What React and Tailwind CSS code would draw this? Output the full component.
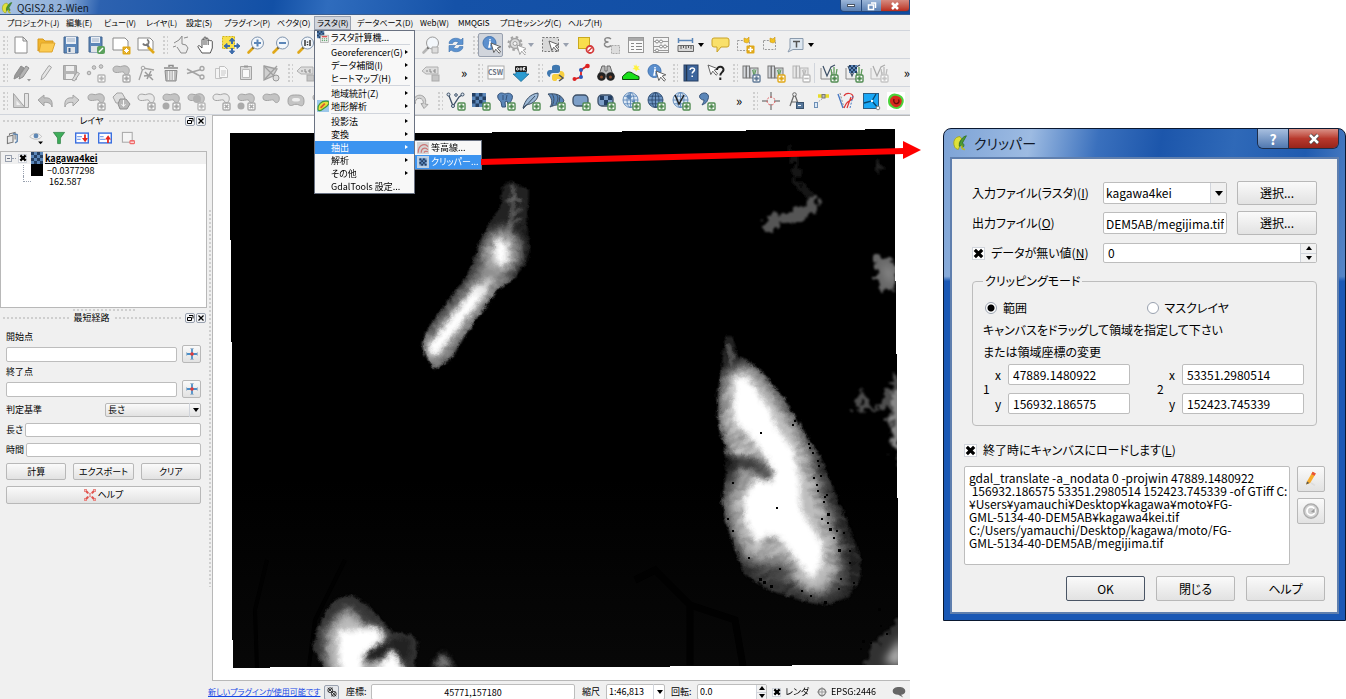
import React from 'react';

const BLUE = '#5b86b8';
const DARK = '#3c4f66';
const GRAY = '#a3a3a3';
const LIGHT = '#cfcfcf';
const GREEN = '#4f8a50';
const GOLD = '#e0a818';

const Svg = ({ children, className = 'h-5 w-5' }) => (
  <svg viewBox="0 0 20 20" className={className} fill="none" aria-hidden="true">
    {children}
  </svg>
);

const Badge = ({ c = GREEN, minus, cross }) => (
  <g>
    <rect x="12" y="12" width="7" height="7" rx="1" fill="#fff" stroke={c} strokeWidth="1.400" />
    {!minus && !cross && <path d="M15.500 13.200v4.600M13.200 15.500h4.600" stroke={c} strokeWidth="2" />}
    {minus && <path d="M13.200 15.500h4.600" stroke={c} strokeWidth="1.600" />}
    {cross && <path d="M13.700 13.700l3.600 3.600M17.300 13.700l-3.600 3.600" stroke={c} strokeWidth="1.600" />}
  </g>
);

const Lens = ({ c = '#7e93ad', handle = GOLD, children }) => (
  <g>
    <path d="M8 12L2.5 17.5" stroke={handle} strokeWidth="2.6" strokeLinecap="round" />
    <path d="M8.5 11.5l-2 2" stroke="#444" strokeWidth="1.6" />
    <circle cx="11.5" cy="8" r="6" fill="#f3f7fb" stroke={c} strokeWidth="1" />
    {children}
  </g>
);

const Blob = ({ f = '#c4c4c4' }) => (
  <path
    d="M2 6.5C2 3.5 5 2.5 8 3.500C10 4.300 12 2 15 3C18.500 4 19 8 17.500 10.500C16 12.500 13.500 11.500 13 9.500C12 8 9 9.500 6.500 9.500C4 9.800 2 9 2 6.500Z"
    fill={f}
    stroke={GRAY}
  />
);

const Cursor = ({ x = 9, y = 8, f = '#fff', s = '#555' }) => (
  <path
    transform={`translate(${x} ${y})`}
    d="M0 0l2.800 9.500 2-3.300 3.300 4 1.500-1.300-3.300-3.900 3.500-1.200z"
    fill={f}
    stroke={s}
    strokeWidth=".9"
  />
);

const Checker = ({ x = 3, y = 3, s = 3 }) => (
  <g>
    <rect x={x} y={y} width={s * 4} height={s * 4} fill={BLUE} />
    {[0, 1, 2, 3].map((r) =>
      [0, 1, 2, 3].map((c) =>
        (r + c) % 2 === 0 ? (
          <rect key={`${r}${c}`} x={x + c * s} y={y + r * s} width={s} height={s} fill="#233f63" />
        ) : null
      )
    )}
  </g>
);

const Globe = ({ dark }) => (
  <g stroke={dark ? '#2d4b70' : BLUE} strokeWidth=".9">
    <circle cx="9.500" cy="9" r="7.500" fill={dark ? '#6f96c4' : '#dbe7f4'} />
    <ellipse cx="9.500" cy="9" rx="3.500" ry="7.500" />
    <path d="M2 9h15M3.200 5.200h12.600M3.200 12.800h12.600M9.500 1.500v15" />
  </g>
);

const Books = ({ g }) => (
  <g stroke={g ? '#b5b5b5' : '#777'} fill={g ? '#e8e8e8' : '#d5d8dc'}>
    <rect x="2" y="3" width="3" height="12" />
    <rect x="5.500" y="3" width="3" height="12" />
    <rect x="9" y="5" width="8" height="10" />
    <path d="M13 12V6M11.500 7l1.500 5M15 6.500L13.500 12" stroke={g ? '#b5b5b5' : '#5d9a5a'} />
  </g>
);

const Layer = ({ g }) => (
  <g>
    <path d="M2 5v11h11V9" fill="#eee" stroke={g ? '#bbb' : '#888'} />
    <path d="M4 3l4 10 4-9 4-2" stroke={g ? '#aaa' : DARK} strokeWidth="1.200" />
    <path d="M13 12l-1-6M15 12V4M17 12l1-6" stroke={g ? '#bbb' : '#5d9a5a'} strokeWidth="1.300" />
  </g>
);

const ICONS = {
  newFile: <path d="M4 2h8l4 4v12H4zM12 2v4h4" fill="#fff" stroke="#8a8a8a" />,
  open: (
    <>
      <path d="M2 16V4h5l2 2h8v4H6z" fill="#f0b52e" stroke="#d89a1c" />
      <path d="M3 17L5 8h14l-3 9z" fill="#fbcb52" stroke="#dfa52c" />
    </>
  ),
  save: (
    <>
      <path d="M3 2h14v16H3z" fill={BLUE} stroke="#42648f" />
      <path d="M5 2h10v7H5z" fill="#e9eef5" />
      <path d="M6 4h8M6 6h8" stroke="#9fb1c8" />
      <path d="M6 12h8v6H6z" fill="#dfe3e8" />
      <path d="M7.500 13h2v4h-2z" fill="#42648f" />
    </>
  ),
  saveAs: (
    <>
      <path d="M3 2h13v15H3z" fill={BLUE} stroke="#42648f" />
      <path d="M5 2h9v6H5z" fill="#e9eef5" />
      <path d="M6 4h7M6 6h7" stroke="#9fb1c8" />
      <path d="M5 11h8v6H5z" fill="#dfe3e8" />
      <rect x="11" y="11" width="8" height="8" rx="2" fill="#5aa05c" />
      <path d="M13 17l4-4" stroke="#fff" strokeWidth="1.500" />
    </>
  ),
  composer: (
    <>
      <path d="M2 3h12l3 3v9H2z" fill="#fff" stroke="#8a8a8a" />
      <rect x="11.500" y="11.500" width="8" height="8" rx="1" fill={GOLD} />
      <path d="M15.500 13v5M13 15.500h5M13.800 13.800l3.500 3.500M17.300 13.800l-3.500 3.500" stroke="#fff" />
    </>
  ),
  composerMgr: (
    <>
      <path d="M2 3h12l3 3v9H2z" fill="#fff" stroke="#8a8a8a" />
      <path d="M12 12l6 6" stroke={GOLD} strokeWidth="2.600" />
      <path d="M10 9l3 3" stroke="#777" strokeWidth="2" />
      <path d="M11 4.500a3 3 0 1 1-4 4" stroke="#777" strokeWidth="1.800" />
    </>
  ),
  touch: (
    <path d="M3 8l5-3 3-4v8l4 1 2 3-2 5h-5l-4-6M2 12l3-1M13 3l4-1" stroke="#8c8c8c" fill="#ececec" strokeWidth="1" />
  ),
  hand: (
    <path
      d="M6 18l-4-6c-.5-1 .8-2 1.800-1L6 13V5c0-1.500 2-1.500 2 0V3c0-1.500 2-1.500 2 0v1c0-1.500 2-1.500 2 0v2c0-1.500 2-1.300 2 0 1-1 2.300-.5 2.300 1v6l-2 5zM8 5v5M10 4v6M12.200 6v4"
      fill="#fff"
      stroke="#555"
    />
  ),
  panSel: (
    <>
      <path d="M1.500 1.500h12v12h-12z" fill="#f8e04a" stroke="#d2b417" strokeDasharray="2 1" />
      <path
        d="M11 3l2.500 3h-5zM11 19l2.500-3h-5zM3 11l3-2.500v5zM19 11l-3-2.500v5z"
        fill="#3d6cab"
        stroke="#3d6cab"
      />
      <path d="M11 6v3M11 13v3M6 11h3M13 11h3" stroke="#3d6cab" strokeWidth="2" />
    </>
  ),
  zoomIn: <Lens><path d="M11.500 4.500v7M8 8h7" stroke={BLUE} strokeWidth="2" /></Lens>,
  zoomOut: <Lens><path d="M8 8h7" stroke={BLUE} strokeWidth="2" /></Lens>,
  zoomOne: <Lens><path d="M9 5v6M14 5v6M11.500 6.500v1.200M11.500 9v1.200" stroke="#333" strokeWidth="1.500" /></Lens>,
  zoomGray: <Lens c="#9a9a9a" handle="#b5b5b5"><path d="M11 12h6v6h-6z" fill="#ddd" stroke="#aaa" /></Lens>,
  refresh: (
    <>
      <path d="M3 8.500c0-5 8-7 12-3.500l2-2v6.500h-6.500l2-2c-2.500-2-5.500-1-6 1z" fill="#5b92d0" stroke="#3f72ad" strokeWidth=".6" />
      <path d="M17 11.500c0 5-8 7-12 3.500l-2 2v-6.500h6.500l-2 2c2.500 2 5.500 1 6-1z" fill="#5b92d0" stroke="#3f72ad" strokeWidth=".6" />
    </>
  ),
  identify: (
    <>
      <circle cx="8.500" cy="8" r="6.500" fill="#5b8fce" stroke="#4375b2" />
      <path d="M9 4v1.500M8 7h1.200L8 12h1.500" stroke="#fff" strokeWidth="1.500" />
      <Cursor x={10} y={8} />
    </>
  ),
  gear: (
    <>
      <circle cx="9" cy="8.500" r="5" stroke={GRAY} strokeWidth="1.500" fill="#ddd" />
      <circle cx="9" cy="8.500" r="6.500" stroke={GRAY} strokeWidth="2" strokeDasharray="2.500 2.600" />
      <circle cx="9" cy="8.500" r="2" fill="#f5f5f5" stroke={GRAY} />
      <Cursor x={11} y={10} s="#999" />
    </>
  ),
  select: (
    <>
      <rect x="1.500" y="2.500" width="16" height="14" fill="#d9d9d9" stroke="#777" strokeDasharray="2 1.500" />
      <Cursor x={8} y={6} />
    </>
  ),
  deselect: (
    <>
      <rect x="2.500" y="2.500" width="11" height="11" fill="#f9de4c" stroke="#c9a91e" />
      <circle cx="14" cy="14.500" r="3.500" fill="#fff" stroke="#d43c3c" strokeWidth="1.800" />
      <path d="M12 16.500l4-4" stroke="#d43c3c" strokeWidth="1.500" />
    </>
  ),
  epsilon: (
    <>
      <path d="M10 4C7 1.500 3 3 4 5.500c.5 1.500 2.500 1.500 3.500 1.500C5 7 3 8 3.500 10c.7 2.500 5 2.500 6.500.5" stroke="#888" strokeWidth="1.500" />
      <rect x="10.500" y="10.500" width="8" height="8" fill="#ddd" stroke="#aaa" strokeDasharray="2 1" />
    </>
  ),
  table: (
    <>
      <rect x="2.500" y="2.500" width="15" height="15" fill="#fafafa" stroke="#999" />
      <path d="M3 4.500h14" stroke="#aaa" strokeWidth="3" />
      <path d="M5 8.500h3M5 11.500h3M5 14.500h3M10 8.500h6M10 11.500h6M10 14.500h6" stroke="#888" />
    </>
  ),
  abacus: (
    <>
      <rect x="2.500" y="2.500" width="15" height="15" fill="#f4f4f4" stroke="#999" />
      <path d="M3 6.500h14M3 11.500h14M3 15.500h14" stroke="#999" />
      <g fill="#fff" stroke="#888">
        <circle cx="6" cy="6.500" r="1.500" /><circle cx="10" cy="6.500" r="1.500" /><circle cx="14" cy="11.500" r="1.500" />
        <circle cx="10" cy="11.500" r="1.500" /><circle cx="6" cy="15.500" r="1.500" />
      </g>
    </>
  ),
  measure: (
    <>
      <path d="M2 5.500h15M2.500 3v5M16.500 3v5" stroke={BLUE} strokeWidth="1.500" />
      <path d="M2 10.500h15.500v6H2z" fill="#d8d8d8" stroke="#666" />
      <path d="M5 11v3M7.500 11v2M10 11v3M12.500 11v2M15 11v3" stroke="#555" />
    </>
  ),
  bubble: <path d="M3 3h13a2 2 0 0 1 2 2v5a2 2 0 0 1-2 2h-6l-4 5v-5H3a2 2 0 0 1-2-2V5a2 2 0 0 1 2-2z" fill="#f9e06a" stroke="#c9a227" />,
  bookmarkNew: (
    <>
      <rect x="1.500" y="5.500" width="12" height="10" stroke="#999" strokeDasharray="2 1.300" />
      <path d="M8 3l3 1 2-2v5l-2 1-3-1z" fill="#f3c220" stroke="#c9981c" strokeWidth=".6" />
      <rect x="10.500" y="10.500" width="8" height="8" rx="1" fill={GOLD} />
      <path d="M14.500 12v5M12 14.500h5" stroke="#fff" strokeWidth="1.600" />
    </>
  ),
  bookmark: (
    <>
      <rect x="2.500" y="5.500" width="12" height="9" stroke="#999" strokeDasharray="2 1.300" />
      <path d="M9 3l3 1 2-2v5l-2 1-3-1z" fill="#f3c220" stroke="#c9981c" strokeWidth=".6" />
    </>
  ),
  textNote: (
    <>
      <path d="M4 3.500h13v11H7L2 17l2-4z" fill="#dde7f1" stroke="#8b9bad" />
      <path d="M7 6.500h7M10.500 6.500v6" stroke="#555" strokeWidth="1.500" />
    </>
  ),
  pencils: (
    <>
      <path d="M3 16l1-4 6-9 3 2-6 9z" fill="#999" stroke="#8c8c8c" />
      <path d="M8 16l1-4 6-9 3 2-6 9z" fill="#b5b5b5" stroke="#8c8c8c" />
      <path d="M16 16h4l-2 2.500z" fill="#999" />
    </>
  ),
  pencil: <path d="M5 17l1-4.500L13 2.500l2.500 1.800L8.500 14.500z" fill="#e5e5e5" stroke={GRAY} />,
  saveGray: (
    <>
      <path d="M2.500 2.500h13v14h-13z" fill="#b5b5b5" stroke={GRAY} />
      <path d="M5 3h8v5H5zM5 11h8v5H5z" fill="#efefef" />
      <path d="M11 17l5-8 2.500 1.500-5 7.500z" fill="#ddd" stroke={GRAY} />
    </>
  ),
  addPts: (
    <>
      <g fill={LIGHT} stroke={GRAY}><circle cx="3" cy="10" r="1.800" /><circle cx="8" cy="4.500" r="1.800" /><circle cx="15" cy="3.500" r="1.800" /></g>
      <Badge c="#b5b5b5" />
    </>
  ),
  blobMove: <><Blob /><Badge c="#a8a8a8" /></>,
  blobAdd: <><Blob f="#e8e8e8" /><Badge c="#a8a8a8" /></>,
  blobDel: <><Blob f="#e8e8e8" /><Badge c="#a8a8a8" cross /></>,
  blobPart: <><Blob /><circle cx="5" cy="15" r="3.500" fill="#aaa" /><Badge c="#a8a8a8" /></>,
  blobPartDel: <><Blob /><circle cx="5" cy="15" r="3.500" fill="#aaa" /><Badge c="#a8a8a8" cross /></>,
  blobFill: <><Blob /><circle cx="11" cy="8" r="4" fill="#b0b0b0" /><Badge c="#b5b5b5" /></>,
  blob: <Blob />,
  ring: (
    <>
      <path d="M2 10c0-6 4-6 8-6s8 0 8 6-3 5-5 4-4-1-6 0-5 1-5-4z" fill="#c4c4c4" stroke={GRAY} />
      <path d="M6 9c0-2 2-2 4-2s4 0 4 2-8 2-8 0z" fill="#eee" />
    </>
  ),
  node: (
    <>
      <path d="M3 17L7 5l11 2" stroke={GRAY} strokeWidth="1.300" />
      <path d="M9 9l8 8M11 16l4-8M8 13l8-1" stroke="#9a9a9a" strokeWidth="1.500" />
      <circle cx="7" cy="5" r="1.800" fill="#eee" stroke={GRAY} />
    </>
  ),
  trash: (
    <>
      <path d="M3 5h14M8 4V2.500h4V4" stroke="#8c8c8c" strokeWidth="1.500" />
      <path d="M4 7.500h12L15 18H5z" fill="#bbb" stroke="#8c8c8c" />
      <path d="M7.500 8v9M10 8v9M12.500 8v9" stroke="#f0f0f0" />
    </>
  ),
  cut: (
    <>
      <path d="M1 6l13 7M1 10.500l14-4" stroke="#a5a5a5" strokeWidth="1.600" />
      <circle cx="16" cy="5.500" r="2" stroke="#a5a5a5" strokeWidth="1.300" />
      <circle cx="16" cy="14" r="2" stroke="#a5a5a5" strokeWidth="1.300" />
    </>
  ),
  copy: (
    <>
      <path d="M4.500 5.500h6v10h-6z" fill="#f4f4f4" stroke="#c4c4c4" />
      <path d="M8.500 3.500h5l3 3v8h-8z" fill="#f8f8f8" stroke="#c0c0c0" />
      <path d="M10 8h5M10 10h5M10 12h4" stroke="#c8c8c8" />
    </>
  ),
  paste: (
    <>
      <path d="M4.500 3.500h11v13h-11z" fill="#ddd" stroke={GRAY} />
      <path d="M6.500 6.500h7v8h-7z" fill="#fafafa" stroke="#bbb" />
      <path d="M8 2.500h4v2H8z" fill="#999" />
    </>
  ),
  topo: (
    <>
      <path d="M3 3l13 3-4 7-9 4z" fill="#d0d0d0" stroke="#a0a0a0" strokeWidth="1.300" />
      <path d="M3 3l13 13M16 3L4 16" stroke="#a0a0a0" strokeWidth="1.300" />
      <circle cx="15" cy="15" r="3" fill="#ddd" stroke="#999" />
    </>
  ),
  triangle: (
    <>
      <path d="M2.500 2.500L14 16.500H2.500z" fill="#cfcfcf" stroke={GRAY} />
      <path d="M5.500 9.500v4.500h4z" fill="#f0f0f0" />
      <path d="M13.500 2.500h4v14h-4z" fill="#e5e5e5" stroke={GRAY} />
    </>
  ),
  undo: <path d="M2 9l6-5v3c6-1 9 2 8 9-1-4-4-5-8-4.500V15z" fill="#c0c0c0" stroke={GRAY} />,
  redo: <path d="M18 9l-6-5v3c-6-1-9 2-8 9 1-4 4-5 8-4.500V15z" fill="#d0d0d0" stroke={GRAY} />,
  rotate: <path d="M3 12a6 6 0 1 1 11 1l3 .5-4 4-3-5 2 .3a4 4 0 1 0-7.500-.3z" fill="#d5d5d5" stroke={GRAY} />,
  simplify: (
    <>
      <path d="M2 6l4-4h5l3 5-4 5H5z" fill="#ddd" stroke={GRAY} />
      <path d="M9 8h6l4 5-3 5H9l-2-5z" fill="#b8b8b8" stroke="#909090" />
      <path d="M12.500 9v6M10.500 13l2 2.500 2-2.500" stroke="#f5f5f5" />
    </>
  ),
  abc: (
    <>
      <path d="M1 8l4-4h12v7H5z" fill="#ddd" stroke="#b0b0b0" />
      <path d="M5 8h2M9 6v3h2M15 7h-2v2h2" stroke="#888" />
      <rect x="11" y="12" width="7" height="6" fill="#c5c5c5" stroke="#aaa" />
    </>
  ),
  csw: <rect x="2" y="3" width="16" height="13" fill="#fcfcfc" stroke="#aaa" />,
  ogr: (
    <>
      <path d="M5 8.500h10v2.500h3l-8 7.500-8-7.500h3z" fill="#2c9bd0" stroke="#1c6a94" strokeWidth=".8" />
      <rect x="4" y="3" width="12" height="6" rx="1" fill="#222" />
      <g stroke="#f2f2f2"><circle cx="6.500" cy="6" r="1.100" /><circle cx="10" cy="6" r="1.100" /><path d="M12.500 7.500v-3h1.500l-1.500 1.500 2 1.500" /></g>
    </>
  ),
  python: (
    <>
      <path d="M6 9V4c0-3 8-3 8 0v4c0 1-1 2-2 2H7c-2 0-3 1-3 4-4-1-4-7 0-7h6" fill="#3f78b0" />
      <path d="M14 8c5-1 6 6 2 8h-5v1c-1 2-5 1-5-1v-3c0-1 1-2 2-2h4c2 0 2-1 2-3z" fill="#f7cf3f" />
      <path d="M13 12l4 3-4 3" stroke="#555" strokeWidth="1.500" />
    </>
  ),
  redPath: (
    <>
      <path d="M4 16l6-2V7l6-4" stroke="#d22" strokeWidth="1.800" />
      <g fill="#2d58b8"><circle cx="10" cy="14" r="2" /><circle cx="10" cy="7" r="2" /></g>
      <g fill="#d22"><circle cx="3.500" cy="16" r="2" /><circle cx="16.500" cy="3" r="2.300" /></g>
    </>
  ),
  binoc: (
    <>
      <path d="M6 3h3v5h2V3h3l3 9H3z" fill="#bbb" stroke="#666" />
      <circle cx="5.500" cy="13.500" r="4.300" fill="#222" /><circle cx="14.500" cy="13.500" r="4.300" fill="#222" />
      <circle cx="5.500" cy="14" r="1.500" fill="#8a4a2a" /><circle cx="14.500" cy="14" r="1.500" fill="#8a4a2a" />
    </>
  ),
  terrain: (
    <>
      <path d="M1.500 16.500v-3L6 9.500c4-2 6 2 12 4v3z" fill="#19e019" stroke="#0a4a0a" />
      <path d="M15 1l1 2.500L18.500 3 17 5l2 2-2.800-.2L15 9l-.8-2.500L11.500 6l2-1.500L12.500 2l2 1z" fill="#fff23d" />
    </>
  ),
  help: (
    <>
      <rect x="3" y="2" width="14" height="16" fill="#3d659c" stroke="#263f63" />
      <path d="M5.500 2v16" stroke="#22354f" strokeWidth="1.500" />
      <path d="M9 7c0-3 5-2.500 4.500 0-.3 1.500-2.300 2-2.300 3.500M11.200 12.500V14" stroke="#fff" strokeWidth="1.500" />
    </>
  ),
  whats: (
    <>
      <Cursor x={2} y={2} />
      <path d="M11 7c0-4.500 7-4 6.500 0-.5 2.500-3.200 2.500-3.200 5.500M14.300 14.500v2.500" stroke="#222" strokeWidth="2" />
    </>
  ),
  grass: <><Books /><Badge c="#607a96" /></>,
  grassNew: <><Books /><Badge c={GOLD} /></>,
  grassGray: <><Books g /><Badge c="#bbb" minus /></>,
  layerAdd: <><Layer /><Badge /></>,
  rasterAdd: <><Layer /><Checker x={5} y={2} s={2} /><Badge /></>,
  layerGray: <><Layer g /><Badge c="#c5c5c5" /></>,
  vAdd: (
    <>
      <path d="M2.500 3.500L7 15l6-9 3-2" stroke={DARK} strokeWidth="1.300" />
      <g fill="#dfe8f2" stroke={DARK}><circle cx="2.500" cy="3.500" r="1.500" /><circle cx="7" cy="15" r="1.500" /><circle cx="10" cy="4" r="1.300" /><circle cx="16.500" cy="3.500" r="1.500" /></g>
      <Badge />
    </>
  ),
  checkAdd: <><Checker x={1} y={2} s={3.5} /><Badge /></>,
  elephant: (
    <>
      <path d="M2 4c2-3 5-2 7-1 4-2 9 0 7 5-.5 2-2 3-2 5h-2l-1-3-2 1 .5 5H6l-1-5C3 9 1 7 2 4z" fill={BLUE} stroke="#345178" />
      <path d="M7 4v5M11 4l-1 5" stroke="#345178" /><Badge />
    </>
  ),
  feather: <><path d="M2 17C4 9 9 3 17 2c1 6-5 11-12 12z" fill="#9db9d6" stroke={DARK} /><path d="M2 18L14 5" stroke={DARK} /><Badge /></>,
  shell: (
    <>
      <path d="M2 3c8-1 14 1 16 7l-5 5c0-2-4-1-9 1 3-4 2-9-2-13z" fill={BLUE} stroke={DARK} />
      <path d="M6 3c3 4 2 8 0 12M10 3c3 4 2 6 0 10M14 5l-1 7" stroke={DARK} /><Badge />
    </>
  ),
  db: <><rect x="2" y="4" width="15" height="11" rx="4" fill="#7d9fc8" stroke={DARK} strokeWidth="1.300" /><Badge /></>,
  dbCheck: (
    <>
      <rect x="2" y="4" width="15" height="11" rx="4" fill="#7d9fc8" stroke={DARK} strokeWidth="1.300" />
      <path d="M4 5h4v4H4zM12 5h4v4h-4zM8 9h4v5H8z" fill="#233f63" /><Badge />
    </>
  ),
  globe: <><Globe /><path d="M5 5l4-2 2 3-3 3zM10 10l4-1v4z" fill={BLUE} /><Badge /></>,
  globeDark: <><Globe dark /><Badge /></>,
  globeV: <><Globe /><path d="M4 4l4 9 5-9" stroke="#222" strokeWidth="1.500" /><Badge /></>,
  comma: <><path d="M5 3c5-3 9 1 7 5-1 4-4 5-6 6 1-2 2-3 2-5-4 0-6-4-3-6z" fill={BLUE} stroke="#345178" /><Badge /></>,
  cross: (
    <>
      <path d="M10 1v6M10 13v6M1 10h6M13 10h6" stroke="#555" />
      <circle cx="10" cy="10" r="4" stroke="#d55" strokeDasharray="2 1.500" />
    </>
  ),
  compass: (
    <>
      <path d="M8 4L4 15M9 4l4 11M5 11h7" stroke="#666" strokeWidth="1.200" /><circle cx="8.500" cy="3.500" r="1.800" fill="#eee" stroke="#666" />
      <rect x="10.500" y="11.500" width="7" height="6" fill="#56779b" stroke="#3a536e" /><path d="M12 14.500h3" stroke="#fff" />
    </>
  ),
  gps: (
    <>
      <path d="M7 5h4M14 5h4" stroke="#e8dc2a" strokeWidth="3.500" /><rect x="11" y="3.500" width="3" height="3.500" fill="#bbb" stroke="#777" />
      <path d="M11 8l-4 3" stroke="#aaa" strokeDasharray="1.500 1" /><rect x="3.500" y="11.500" width="3" height="5" fill="#dce9f7" stroke="#6d8fb5" />
    </>
  ),
  tracks: (
    <>
      <path d="M2 3l5 14" stroke="#4477c4" strokeWidth="1.300" /><path d="M4 2l4 15" stroke="#888" strokeDasharray="2 1.500" />
      <path d="M8 5c2-4 9-3 9 1s-5 3-7 7l-2 4M11 17l4-11" stroke="#d33" strokeWidth="1.200" /><path d="M14 17l3-12" stroke="#4477c4" strokeDasharray="2 1.500" />
    </>
  ),
  voronoi: (
    <>
      <rect x="2.500" y="2.500" width="15" height="15" fill="#19a7f5" stroke="#2a5d84" /><path d="M3 12l8-2 4-7M11 10l6 7" stroke="#06476f" strokeWidth="1.300" />
      <g fill="#fff"><circle cx="11" cy="10" r="1.200" /><circle cx="17" cy="17" r="1.800" stroke="#888" /></g>
    </>
  ),
  spiral: (
    <>
      <rect x="1" y="1" width="18" height="18" fill="#fff" /><path d="M2 10c0-6 5-9 9-7 6 1 8 6 6 10-2 6-8 6-12 3-2-1-3-3-3-6z" fill="#4bd43b" />
      <path d="M4 10c0-4 4-6 7-5 4 1 6 4 4 8-2 4-7 4-9 1-1-1-2-2-2-4z" fill="#d8281c" /><path d="M8 8c-1 3 1 5 3 4.500s2.500-2 1.500-4" stroke="#6a0d0a" strokeWidth="1.400" />
    </>
  ),
};

const TOOLBARS = [
  ['newFile', 'open', 'save', 'saveAs', 'composer', 'composerMgr', '|', 'touch', 'hand', 'panSel', 'zoomIn', 'zoomOut', 'zoomOne', 'zoomGray', 'zoomGray', 'zoomGray', 'zoomGray', 'zoomGray', 'refresh', '|', 'identify*', 'gear', 'v', 'select', 'v', 'deselect', 'epsilon', 'table', 'abacus', 'measure', 'V', 'bubble', 'bookmarkNew', 'bookmark', 'textNote', 'V'],
  ['pencils', 'pencil', 'saveGray', 'addPts', 'blobMove', 'node', 'trash', 'cut', 'copy', 'paste', 'topo', '|', 'abc', 'abc', 'abc', 'abc', 'abc', 'abc', '>', '|', 'csw', 'ogr', '|', 'python', 'redPath', 'binoc', 'terrain', 'identify', '|', 'help', 'whats', '|', 'grass', 'grassNew', 'grassGray', '/', 'layerAdd', 'rasterAdd', 'layerGray', '>>'],
  ['triangle', 'undo', 'redo', 'blobMove', 'simplify', 'blobAdd', 'blobPart', 'blobFill', 'blobDel', 'blobPartDel', 'blob', 'ring', 'blob', 'blob', 'blob', 'blob', 'rotate', '|', 'vAdd', 'checkAdd', 'elephant', 'feather', 'shell', 'db', 'dbCheck', 'globe', 'globeDark', 'globeV', 'comma', '>', '|', 'cross', 'compass', 'gps', 'tracks', 'voronoi', 'spiral'],
];

const Grip = ({ className }) => (
  <span className={`block bg-[radial-gradient(circle,#cfcfcf_1px,transparent_1px)] bg-[length:4px_4px] ${className}`} />
);

const Tri = ({ className = 'border-t-black' }) => (
  <span className={`block h-0 w-0 border-x-[3px] border-t-4 border-x-transparent ${className}`} />
);

function ToolItem({ name }) {
  if (name === '|') return <span className="flex w-2.5 shrink-0 justify-end"><Grip className="h-5 w-1.5" /></span>;
  if (name === 'v') return <span className="w-2.5 shrink-0"><Tri className="border-t-gray-400" /></span>;
  if (name === 'V') return <span className="w-2.5 shrink-0"><Tri /></span>;
  if (name === '/') return <span className="mx-px h-5 w-px shrink-0 bg-gray-300" />;
  if (name === '>') return <button className="w-[30px] shrink-0 pl-3 text-center text-[13px] leading-4">»</button>;
  if (name === '>>') return <button className="ml-auto shrink-0 text-[13px] leading-4">»</button>;
  const active = name.endsWith('*');
  const key = name.replace('*', '');
  return (
    <button
      aria-label={key}
      className={`relative grid h-6 w-[25px] shrink-0 place-items-center ${active ? 'rounded-xs border border-gray-400 bg-gray-300' : ''}`}
    >
      <Svg>{ICONS[key]}</Svg>
      {key === 'csw' && <span className="absolute text-[7px] leading-none font-bold text-gray-500">CSW</span>}
    </button>
  );
}

const MENUS = [
  ['プロジェクト(J)', 'w-[59px]'],
  ['編集(E)', 'w-[38px]'],
  ['ビュー(V)', 'w-[42px]'],
  ['レイヤ(L)', 'w-10'],
  ['設定(S)', 'w-[38px]'],
  ['プラグイン(P)', 'w-[53px]'],
  ['ベクタ(O)', 'w-10'],
  ['ラスタ(R)', 'w-10'],
  ['データベース(D)', 'w-[63px]'],
  ['Web(W)', 'w-[38px]'],
  ['MMQGIS', 'w-[42px]'],
  ['プロセッシング(C)', 'w-[68px]'],
  ['ヘルプ(H)', 'w-10'],
];

const RASTER = [
  ['ラスタ計算機...', false, 'calc'],
  null,
  ['Georeferencer(G)', true],
  ['データ補間(I)', true],
  ['ヒートマップ(H)', true],
  null,
  ['地域統計(Z)', true],
  ['地形解析', true, 'terrain'],
  null,
  ['投影法', true],
  ['変換', true],
  ['抽出', true, null, true],
  ['解析', true],
  ['その他', true],
  ['GdalTools 設定...', false],
];

const MENU_ICONS = {
  calc: (
    <Svg className="h-3 w-3">
      <Checker x={0} y={0} s={3} />
      <rect x="6" y="7" width="13" height="12" fill="#eee" stroke="#999" />
      <path d="M8 9.500h9" stroke="#d44" strokeWidth="2" /><path d="M8 13h9M8 16h9" stroke="#4a9a5a" strokeWidth="1.500" strokeDasharray="2 1.500" />
    </Svg>
  ),
  terrain: (
    <Svg className="h-3 w-3">
      <rect width="20" height="20" fill="#9cc8ea" />
      <path d="M2 17C0 8 8 1 16 2s2 8-3 11-8 7-11 4z" fill="#e8df3c" stroke="#3f9a3a" strokeWidth="2" /><path d="M6 13l7-7" stroke="#dd5a2a" strokeWidth="3" />
    </Svg>
  ),
};

function RasterMenu() {
  return (
    <ul className="absolute top-full left-0 z-20 w-[101px] border border-gray-500 bg-[#f8f8f8] text-[9px] leading-[13px] text-black">
      {RASTER.map((m, i) =>
        m === null ? (
          <li key={i} className="mr-1 ml-4 h-0.5 border-t border-gray-300" />
        ) : (
          <li key={i} className={`relative flex h-[13px] items-center ${m[3] ? 'bg-[#3c94f0] text-white' : ''}`}>
            <span className="grid w-4 shrink-0 place-items-center">{m[2] && MENU_ICONS[m[2]]}</span>
            <button className="flex-1 text-left whitespace-nowrap">{m[0]}</button>
            {m[1] && <span className={`mr-1.5 h-0 w-0 border-y-2 border-l-[3px] border-y-transparent ${m[3] ? 'border-l-white' : 'border-l-black'}`} />}
            {m[3] && (
              <ul className="absolute -top-px left-full w-[68px] border border-gray-500 bg-[#f8f8f8] text-black">
                <li className="flex h-[14px] items-center">
                  <span className="grid w-4 place-items-center">
                    <Svg className="h-3 w-3">
                      <rect width="20" height="20" fill="#d5d5d5" />
                      <path d="M2 18C2 2 16 2 18 8M7 18c0-9 8-9 11-5M12 18c0-3 3-3 6-2" stroke="#c77" strokeWidth="2" />
                    </Svg>
                  </span>
                  <button className="whitespace-nowrap">等高線...</button>
                </li>
                <li className="flex h-[14px] items-center bg-[#3c94f0] text-white">
                  <span className="grid w-4 place-items-center">
                    <Svg className="h-3 w-3">
                      <rect width="20" height="20" fill="#bcd0e4" />
                      <Checker x={4} y={4} s={3} />
                    </Svg>
                  </span>
                  <button className="whitespace-nowrap">クリッパー...</button>
                </li>
              </ul>
            )}
          </li>
        )
      )}
    </ul>
  );
}

const QLogo = ({ className }) => (
  <Svg className={className}>
    <path d="M10 2C3 2 1 9 3 14c1 3 3 4 5 4l2-5c-2-2-1-6 3-7z" fill="#dfe23a" stroke="#9a9e1a" />
    <path d="M18 1c-5 1-9 7-9 13l3-1 1 3c3-2 2-5 0-6z" fill="#4c9a34" stroke="#2f6e22" />
    <path d="M12 13c0 3 1 5 4 5" stroke="#b9bd22" strokeWidth="2" />
  </Svg>
);

const Check = ({ label, children, big }) => (
  <label className={`flex items-center whitespace-nowrap ${big ? 'gap-1.5' : 'gap-1'}`}>
    <span className="grid shrink-0">
      <input
        type="checkbox"
        defaultChecked
        aria-label={label}
        className={`peer col-start-1 row-start-1 appearance-none border border-gray-300 bg-white ${big ? 'h-[13px] w-[13px]' : 'h-[9px] w-[9px]'}`}
      />
      <svg
        viewBox="0 0 12 12"
        className={`pointer-events-none invisible col-start-1 row-start-1 place-self-center peer-checked:visible ${big ? 'h-[11px] w-[11px]' : 'h-2 w-2'}`}
      >
        <path d="M2 2l8 8M10 2l-8 8" stroke="#000" strokeWidth="3.500" />
      </svg>
    </span>
    {children}
  </label>
);

const DockTitle = ({ children }) => (
  <div className="flex h-3 items-center pr-px">
    <Grip className="ml-0.5 h-1 flex-1" />
    <h2 className="px-1 text-[9px] leading-3">{children}</h2>
    <Grip className="mr-1 h-1 flex-1" />
    <div className="flex gap-px">
      <button aria-label="フロート" className="grid h-2.5 w-2.5 place-items-center rounded-xs border border-gray-400 bg-gray-100">
        <svg viewBox="0 0 8 8" className="h-2 w-2" fill="none" stroke="#000"><path d="M3 1.500h4v3M1.500 3.500h4v3h-4z" /></svg>
      </button>
      <button aria-label="閉じる" className="grid h-2.5 w-2.5 place-items-center rounded-xs border border-gray-400 bg-gray-100">
        <svg viewBox="0 0 8 8" className="h-2 w-2" stroke="#000" strokeWidth="1.300"><path d="M1.500 1.500l5 5M6.500 1.500l-5 5" /></svg>
      </button>
    </div>
  </div>
);

const FIELD = 'min-w-0 rounded-xs border border-[#bdbdbd] bg-white';
const BTN = 'rounded-xs border border-[#b8b8b8] bg-linear-to-b from-[#fafafa] to-[#e2e2e2] text-center whitespace-nowrap';

const Target = () => (
  <Svg className="h-3 w-3">
    <path d="M10 1v18M1 10h18" stroke="#4b8fc9" strokeWidth="3" />
    <path d="M7 1h6M7 19h6M1 7v6M19 7v6" stroke="#9fb3c6" strokeWidth="1.500" />
    <circle cx="10" cy="10" r="3" fill="#e23b3b" />
  </Svg>
);

const DockTools = () => (
  <div className="flex h-[22px] items-center gap-[9px] pl-1.5">
    <button aria-label="グループ追加"><Svg className="h-3.5 w-3.5"><path d="M2 8l8-2v10l-8 2z" fill="#e8e8e8" stroke="#777" strokeWidth="1.500" /><path d="M5 6V4l8-2v10" stroke="#777" strokeWidth="1.500" /><path d="M10 4l6 1v10l-3 2" stroke="#5d83ad" strokeWidth="2" /></Svg></button>
    <button aria-label="表示管理"><Svg className="h-3.5 w-3.5"><path d="M1 8c5-6 13-6 17 0-4 5-12 5-17 0z" fill="#f4f4f4" stroke="#aaa" /><circle cx="10" cy="7" r="3.500" fill="#5f88b5" /><path d="M13 15h7l-3.500 4z" fill="#000" /></Svg></button>
    <button aria-label="フィルタ"><Svg className="h-3.5 w-3.5"><path d="M2 2h16l-6 8v8H8v-8z" fill="#3fae5b" stroke="#21783a" /></Svg></button>
    <button aria-label="すべて展開"><Svg className="h-3.5 w-3.5"><rect x="1" y="3" width="18" height="14" fill="#fff" stroke="#3a6fe0" strokeWidth="2" /><path d="M3 8h7M3 12h5" stroke="#7fa4ea" strokeWidth="2" /><path d="M13 5v5h-3l4.500 6 4-6h-3V5z" fill="#e8251c" /></Svg></button>
    <button aria-label="すべて折りたたむ"><Svg className="h-3.5 w-3.5"><rect x="1" y="3" width="18" height="14" fill="#fff" stroke="#3a6fe0" strokeWidth="2" /><path d="M3 8h5M3 12h7" stroke="#7fa4ea" strokeWidth="2" /><path d="M13 17v-5h-3l4.500-6 4 6h-3v5z" fill="#e8251c" /></Svg></button>
    <button aria-label="レイヤ削除"><Svg className="h-3.5 w-3.5"><rect x="2" y="2" width="14" height="14" fill="#f5f5f5" stroke="#aaa" strokeWidth="1.500" /><rect x="12" y="13" width="8" height="6" rx="2" fill="#ef6a6a" /><path d="M13.500 16h5" stroke="#fff" strokeWidth="1.500" /></Svg></button>
  </div>
);

function SidePanel() {
  return (
    <div className="flex w-[207px] shrink-0 flex-col">
      <DockTitle>レイヤ</DockTitle>
      <DockTools />
      <ul className="mt-0.5 h-[157px] border border-[#b8b8b8] bg-white text-[9px] leading-[11px]">
        <li className="flex items-center bg-[#f0f0f0] pl-1">
          <span className="grid h-[7px] w-[7px] place-items-center border border-gray-400"><span className="h-px w-[3px] bg-gray-500" /></span>
          <span className="mr-0.5 w-1 border-t border-dotted border-gray-400" />
          <Check label="kagawa4kei">
            <Svg className="h-3 w-3"><Checker x={0} y={0} s={5} /></Svg>
            <span className="-ml-0.5 font-bold underline">kagawa4kei</span>
          </Check>
        </li>
        <li className="flex items-center pl-[22px]">
          <span className="h-[11px] w-2 border-l border-dotted border-gray-400" />
          <span className="mr-1 h-3 w-3 bg-black" />−0.0377298
        </li>
        <li className="flex items-center pl-[22px]">
          <span className="mr-[18px] h-[6px] w-2 self-start border-b border-l border-dotted border-gray-400" />162.587
        </li>
      </ul>
      <Grip className="mx-auto h-1 w-16" />
      <DockTitle>最短経路</DockTitle>
      <form className="flex flex-col px-1.5 pt-[7px] text-[9px] leading-3" onSubmit={(e) => e.preventDefault()}>
        <label htmlFor="from">開始点</label>
        <div className="mt-0.5 mb-[3px] flex items-center gap-[5px]">
          <input id="from" className={`${FIELD} h-[15px] flex-1`} />
          <button aria-label="開始点を選択" className={`${BTN} grid h-[18px] w-[19px] place-items-center`}><Target /></button>
        </div>
        <label htmlFor="to">終了点</label>
        <div className="mt-0.5 mb-[5px] flex items-center gap-[5px]">
          <input id="to" className={`${FIELD} h-[15px] flex-1`} />
          <button aria-label="終了点を選択" className={`${BTN} grid h-[18px] w-[19px] place-items-center`}><Target /></button>
        </div>
        <div className="flex items-center justify-between">
          <label htmlFor="crit">判定基準</label>
          <span className="grid w-24">
            <select id="crit" className={`${BTN} col-start-1 row-start-1 h-[14px] appearance-none pl-0.5 text-left leading-3`}>
              <option>長さ</option>
            </select>
            <span className="pointer-events-none col-start-1 row-start-1 grid h-[14px] w-3 place-items-center justify-self-end border-l border-gray-300"><Tri /></span>
          </span>
        </div>
        <div className="mt-1.5 flex items-center gap-0.5">
          <label htmlFor="len">長さ</label>
          <input id="len" className={`${FIELD} h-[14px] flex-1`} />
        </div>
        <div className="mt-1.5 flex items-center gap-0.5">
          <label htmlFor="time">時間</label>
          <input id="time" className={`${FIELD} h-[14px] flex-1`} />
        </div>
        <div className="mt-1.5 grid grid-cols-3 gap-[7px]">
          <button className={`${BTN} h-[17px]`}>計算</button>
          <button className={`${BTN} h-[17px]`}>エクスポート</button>
          <button className={`${BTN} h-[17px]`}>クリア</button>
        </div>
        <button className={`${BTN} mt-1.5 flex h-[18px] items-center justify-center gap-0.5`}>
          <Svg className="h-3 w-3">
            <path d="M3 3l4 4M17 3l-4 4M3 17l4-4M17 17l-4-4" stroke="#e0534e" strokeWidth="3.500" />
            <path d="M1 5V1h4M15 1h4v4M19 15v4h-4M5 19H1v-4M8 7l2 2 2-2M8 13l2-2 2 2" stroke="#ea8a86" strokeWidth="2" />
          </Svg>
          ヘルプ
        </button>
      </form>
    </div>
  );
}

const SPECKS = [[792, 424], [794, 420], [760, 432], [809, 447], [812, 452], [817, 460], [813, 477], [816, 484], [817, 490], [824, 496], [823, 501], [827, 513, 2], [821, 518], [827, 522], [829, 528, 2], [833, 537], [838, 549, 2], [849, 550], [849, 562], [840, 578], [776, 507], [727, 518], [732, 482], [732, 530], [748, 557], [759, 578, 2], [763, 581, 2], [770, 585, 2], [779, 568], [801, 590], [810, 595], [824, 601, 2], [838, 588], [808, 443], [818, 465], [820, 475], [826, 494], [836, 530], [843, 532], [853, 582], [862, 640, 2], [878, 608, 2], [860, 648], [870, 642], [880, 625], [886, 633]];

const ISLANDS = {
  north: 'M503 184l9-3 6 4 11 5-1 15-1 20 3 27-3 10-15 18-15 10-12 17-20 28-13 23-18 12-10-17-2-10 8-18 17-23 19-25 7-15 4-15 13-25 10-15z',
  east: 'M725 337l7-1 3 9 2 10 8 4 17 13 23 28 15 25 22 35 16 40 12 30 11 30-1 20-12 17-20 8-28-5-30-10-25-15-10-25-10-30-3-20 4-25-2-30-6-20v-30l4-30z',
  south: 'M320 622l10-17 10-8 12-2 13 8 12 12 15 17 20 3 6 6-4 29h-90l-12-24z',
};

function ridgeLines(spine, count, from, to, seed) {
  const lines = [];
  for (let i = 0; i < count; i += 1) {
    const t = (i / count) * (spine.length - 1);
    const k = Math.floor(t);
    const f = t - k;
    const [ax, ay] = spine[k];
    const [bx, by] = spine[k + 1];
    const x = ax + (bx - ax) * f;
    const y = ay + (by - ay) * f;
    const base = Math.atan2(by - ay, bx - ax);
    [1, -1].forEach((side) => {
      const a = base + side * (1.4 + Math.sin(i * 2.7 + seed) * 0.4);
      const r = to * (0.8 + Math.sin(i * 5.1 + seed * side) * 0.2);
      lines.push(`M${x + Math.cos(a) * from} ${y + Math.sin(a) * from}L${x + Math.cos(a) * r} ${y + Math.sin(a) * r}`);
    });
  }
  return lines.join('');
}

const NORTH_RIDGES = ridgeLines([[436, 352], [486, 284], [502, 250], [506, 225]], 34, 9, 34, 1);
const EAST_RIDGES = ridgeLines([[742, 370], [780, 445], [800, 510], [815, 585]], 54, 16, 70, 2);
const EAST_CREST = ridgeLines([[742, 372], [778, 445], [798, 510], [815, 585]], 47, 12, 60, 5);

function MapView() {
  return (
    <svg viewBox="213 116 697 564" preserveAspectRatio="none" className="block h-full w-full" role="img" aria-label="標高ラスタ">
      <defs>
        <filter id="rough" x="-20%" y="-20%" width="140%" height="140%">
          <feGaussianBlur stdDeviation=".8" result="b" />
          <feTurbulence type="fractalNoise" baseFrequency=".16" numOctaves="3" seed="4" result="n" />
          <feDisplacementMap in="b" in2="n" scale="5" xChannelSelector="R" yChannelSelector="G" />
        </filter>
        <filter id="shred" x="-30%" y="-30%" width="160%" height="160%">
          <feTurbulence type="fractalNoise" baseFrequency=".13" numOctaves="2" seed="11" result="n" />
          <feDisplacementMap in="SourceGraphic" in2="n" scale="18" xChannelSelector="R" yChannelSelector="G" result="d" />
          <feGaussianBlur in="d" stdDeviation="1.300" />
        </filter>
        <filter id="wide" x="-40%" y="-40%" width="180%" height="180%"><feGaussianBlur stdDeviation="9" /></filter>
        <filter id="mid" x="-40%" y="-40%" width="180%" height="180%"><feGaussianBlur stdDeviation="5" /></filter>
        <filter id="core" x="-40%" y="-40%" width="180%" height="180%"><feGaussianBlur stdDeviation="2.500" /></filter>
        <filter id="line" x="-10%" y="-10%" width="120%" height="120%"><feGaussianBlur stdDeviation=".8" /></filter>
        <linearGradient id="plain" x1="0" y1="0" x2="0" y2="1">
          <stop offset="0" stopColor="#000" />
          <stop offset="1" stopColor="#080808" />
        </linearGradient>
        <clipPath id="extent">
          <path d="M230 133L492 133V132H622V131H746V130H865V129H895V281H896V354H897V498H898V665H792V666H670V667H270V668H233V640H232V342H231V240H230z" />
        </clipPath>
        <clipPath id="north"><path d={ISLANDS.north} /></clipPath>
        <clipPath id="east"><path d={ISLANDS.east} /></clipPath>
        <clipPath id="south"><path d={ISLANDS.south} /></clipPath>
      </defs>
      <rect x="213" y="116" width="697" height="564" fill="#fff" />
      <g clipPath="url(#extent)">
        <rect x="213" y="116" width="697" height="564" fill="#000" />
        <rect x="213" y="480" width="697" height="200" fill="url(#plain)" />
        <g stroke="#010101" fill="none">
          <path d="M267 560l-12 50 2 60M345 560l-30 60-6 46" strokeWidth="4" />
          <path d="M635 580l20-10 35 35 45 15 8 46M690 605v60" strokeWidth="7" />
        </g>

        <g filter="url(#rough)">
          <g clipPath="url(#north)">
            <rect x="410" y="175" width="130" height="205" fill="#222" />
            <path d="M434 352L490 282L502 246" stroke="#8a8a8a" strokeWidth="36" strokeLinecap="round" fill="none" filter="url(#mid)" />
            <circle cx="501" cy="252" r="18" fill="#b5b5b5" filter="url(#mid)" />
            <path d={NORTH_RIDGES} stroke="#000" strokeOpacity=".3" strokeWidth="1.400" filter="url(#line)" />
            <path d="M512 184l2 14 8 4M514 198l-8 4M513 200l-1 18-6 14-2 14M512 214l10-6M508 228l12-10" stroke="#777" strokeWidth="2" fill="none" filter="url(#line)" />
            <path d="M434 349L480 291" stroke="#fff" strokeWidth="13" strokeLinecap="round" filter="url(#core)" />
            <path d="M478 294l14-16" stroke="#ddd" strokeWidth="5" filter="url(#core)" />
            <path d="M496 242l9 1 1 20-9-1z" fill="#fff" stroke="#fff" strokeWidth="3" filter="url(#core)" />
          </g>

          <g clipPath="url(#east)">
            <rect x="700" y="330" width="180" height="280" fill="#242424" />
            <path d="M738 372L780 440L802 510L818 570L770 560L748 500L770 480" stroke="#8c8c8c" strokeWidth="48" strokeLinejoin="round" fill="#8c8c8c" filter="url(#wide)" />
            <path
              d="M728 374l18-8 32 38 26 38 14 50 18 46v34l-16 20-28-10-36-18-18-28-8-32 14-26-14-22-12-40z"
              fill="#bbb"
              filter="url(#mid)"
            />
            <path d="M708 464q40-10 64 14" stroke="#000" strokeOpacity=".75" strokeWidth="12" fill="none" filter="url(#mid)" />
            <path d="M730 572q30-18 55-12l20 40z" fill="#000" fillOpacity=".5" filter="url(#mid)" />
            <path d={EAST_RIDGES} stroke="#000" strokeOpacity=".25" strokeWidth="1.800" filter="url(#line)" />
            <path d={EAST_CREST} stroke="#fff" strokeOpacity=".12" strokeWidth="1.600" filter="url(#line)" />
            <path
              d="M738 380h8l22 32 4 13 18 25 7 30 1 30 12 20 10 15-2 20-6 10-12-15-15-20-15-10-12 10-10-20-2-20 11-18 18 3 2-15-20-30-20-20-1-20z"
              fill="#fff"
              stroke="#fff"
              strokeWidth="6"
              filter="url(#core)"
            />
          </g>

          <g clipPath="url(#south)">
            <rect x="300" y="585" width="130" height="90" fill="#333" />
            <path d="M324 634l22-26 22 16 18 12-4 36h-54z" fill="#bbb" filter="url(#mid)" />
            <path d="M340 633l38-3 3 12-19 12-2 18h-18z" fill="#fff" stroke="#fff" strokeWidth="4" filter="url(#core)" />
            <path d="M362 662q10-24 48-24v20z" fill="#222" filter="url(#core)" />
            <path d="M374 674l18-24 14 24z" fill="#fff" stroke="#fff" strokeWidth="2" filter="url(#core)" />
            <path d="M368 606l-6 14 14-2M330 640l-14 2" stroke="#333" strokeWidth="3" fill="none" filter="url(#core)" />
          </g>
          <path d="M432 668l11-16 11 16z" fill="#777" filter="url(#core)" />
          <path d="M728 345l4 12-2 10" stroke="#555" strokeWidth="4" fill="none" />
        </g>

        <g filter="url(#shred)">
          <path d="M766 230l8-10 20-4 18-8 4-8" stroke="#555" strokeWidth="12" fill="none" />
          <path d="M874 254l10 2 14 10v20l-12 6-10-14z" fill="#666" />
          <path d="M856 410l4-20 16 16 12-18 12-14v94l-9-20-4-40z" fill="#4d4d4d" />
          <path d="M893 392h8v66l-8-10z" fill="#888" />
          <path d="M788 146l5 14 6 22 10 14" stroke="#161616" strokeWidth="6" fill="none" />
          <path d="M870 167l8-8 8 9-8 4z" fill="#222" />
          <path d="M864 668l10-22 10-12 18-16v56z" fill="#333" />
        </g>
        <g filter="url(#mid)">
          <path d="M882 262l12 10-4 14z" fill="#999" />
          <path d="M902 636l-18 26 18 4z" fill="#bbb" />
        </g>
        <g fill="#000">
          {SPECKS.map(([x, y, r = 1]) => (
            <rect key={`${x}-${y}`} x={x} y={y} width={r + 1} height={r + 1} />
          ))}
        </g>
      </g>
    </svg>
  );
}

const Spin = ({ big }) => (
  <span className={`flex flex-col divide-y divide-gray-300 border-l border-gray-300 bg-[#f2f2f2] ${big ? 'w-4' : 'w-2.5'}`}>
    <button aria-label="増やす" className="grid flex-1 place-items-center"><span className="h-0 w-0 border-x-[3px] border-b-4 border-x-transparent border-b-black" /></button>
    <button aria-label="減らす" className="grid flex-1 place-items-center"><Tri /></button>
  </span>
);

function StatusBar() {
  return (
    <footer className="flex h-[18px] shrink-0 items-center overflow-hidden pt-1 pl-[208px] text-[9px] leading-3 whitespace-nowrap">
      <a href="#plugins" className="w-[116px] shrink-0 text-[8px] text-blue-700 underline">新しいプラグインが使用可能です</a>
      <button aria-label="マウス位置" className="grid h-[15px] w-[15px] shrink-0 place-items-center rounded-xs border border-gray-400 bg-gray-200">
        <Svg className="h-3 w-3"><path d="M3 3l14 14M4 9l7-6M9 17l7-7" stroke="#222" strokeWidth="1.500" /><circle cx="7" cy="7" r="4" stroke="#222" strokeWidth="1.500" /><circle cx="13" cy="13" r="4" stroke="#222" strokeWidth="1.500" /></Svg>
      </button>
      <label htmlFor="coord" className="w-8 shrink-0 pl-[7px]">座標:</label>
      <input id="coord" defaultValue="45771,157180" className={`${FIELD} h-4 flex-1 text-center`} />
      <label htmlFor="scale" className="w-[31px] shrink-0 pl-[7px]">縮尺</label>
      <span className="grid w-[59px] shrink-0">
        <select id="scale" className={`${FIELD} col-start-1 row-start-1 h-4 appearance-none pl-0.5`}><option>1:46,813</option></select>
        <span className="pointer-events-none col-start-1 row-start-1 grid w-3 place-items-center justify-self-end border-l border-gray-300"><Tri /></span>
      </span>
      <label htmlFor="rot" className="w-8 shrink-0 pl-1.5">回転:</label>
      <span className={`${FIELD} flex h-4 w-[70px] shrink-0`}>
        <input id="rot" defaultValue="0.0" className="min-w-0 flex-1 pl-0.5" />
        <Spin />
      </span>
      <span className="ml-[5px] w-[45px] shrink-0"><Check label="レンダ">レンダ</Check></span>
      <button className="flex shrink-0 items-center gap-1">
        <Svg className="h-2.5 w-2.5"><circle cx="10" cy="10" r="7" stroke="#777" strokeWidth="2.500" /><path d="M10 0v20M0 10h20" stroke="#999" strokeWidth="2" /></Svg>
        EPSG:2446
      </button>
      <button aria-label="メッセージ" className="mr-1 ml-4 shrink-0"><Svg className="h-3.5 w-3.5"><path d="M10 3c5 0 9 2 9 6 0 3-3 5-6 5l3 4-7-4c-5 0-8-2-8-5 0-4 4-6 9-6z" fill="#666" /></Svg></button>
    </footer>
  );
}

function MainWindow() {
  return (
    <section className="flex h-screen min-w-0 flex-1 flex-col bg-[#f0f0f0]">
      <header className="flex h-[15px] shrink-0 items-start justify-between border-b border-[#3c5f8f] bg-[linear-gradient(100deg,#a9c3e3_0%,#8fb0da_7%,#2d62b0_11%,#1250a6_30%,#2f6cbd_36%,#1552a8_50%,#0f4ca3_100%)]">
        <h1 className="flex items-center gap-1 pl-px text-[10px] leading-[15px] text-gray-900">
          <QLogo className="h-3 w-3" />
          QGIS2.8.2-Wien
        </h1>
        <div className="flex h-3 overflow-hidden rounded-b border-x border-b border-[#26477a]">
          <button aria-label="最小化" className="grid w-5 place-items-center bg-linear-to-b from-[#9cb6d8] to-[#5b80b3]"><span className="h-[3px] w-2 border border-gray-600 bg-white" /></button>
          <button aria-label="元に戻す" className="grid w-5 place-items-center border-l border-[#26477a] bg-linear-to-b from-[#9cb6d8] to-[#5b80b3]">
            <svg viewBox="0 0 10 10" className="h-2.5 w-2.5" fill="none" stroke="#fff" strokeWidth="1.500"><path d="M4 2h4.500v5M1.500 4h5v4.500h-5z" /></svg>
          </button>
          <button aria-label="終了" className="grid w-7 place-items-center bg-linear-to-b from-[#d58a80] to-[#b8291c]">
            <svg viewBox="0 0 10 10" className="h-2.5 w-2.5" stroke="#fff" strokeWidth="2.500"><path d="M2 2l6 6M8 2L2 8" /></svg>
          </button>
        </div>
      </header>
      <nav className="flex h-[15px] shrink-0 items-center pl-1 text-[8px] leading-3">
        {MENUS.map(([m, w], i) => (
          <div key={m} className={`relative shrink-0 ${w}`}>
            <button className={`border px-0.5 whitespace-nowrap ${i === 7 ? 'border-gray-400 bg-gray-300' : 'border-transparent'}`}>{m}</button>
            {i === 7 && <RasterMenu />}
          </div>
        ))}
      </nav>
      {TOOLBARS.map((row, i) => (
        <div key={i} className="flex h-7 shrink-0 items-center border-t border-gray-300 pl-0.5">
          <Grip className="h-5 w-1.5 shrink-0" />
          {row.map((n, j) => (
            <ToolItem key={j} name={n} />
          ))}
        </div>
      ))}
      <div className="flex min-h-0 flex-1 border-t border-gray-300">
        <SidePanel />
        <div className="flex w-[5px] shrink-0 items-center justify-center"><Grip className="h-2/3 w-1" /></div>
        <main className="min-w-0 flex-1 border-y border-l border-[#b8b8b8] bg-white"><MapView /></main>
      </div>
      <StatusBar />
    </section>
  );
}

const Coord = ({ n, x, y }) => (
  <div className="flex items-center">
    <span className="w-3">{n}</span>
    <div className="flex flex-col gap-2">
      {[['x', x], ['y', y]].map(([k, v]) => (
        <label key={k} className="flex h-[21px] items-center gap-1.5">
          <span className="w-[7px]">{k}</span>
          <input defaultValue={v} className={`${FIELD} h-[21px] w-[122px] px-1`} />
        </label>
      ))}
    </div>
  </div>
);

function ClipperDialog() {
  return (
    <section className="flex h-[493px] w-[403px] flex-col rounded-t-lg border border-[#0a1830] bg-[linear-gradient(180deg,transparent_30%,#1a58b5_31%),linear-gradient(100deg,#7da3d6_0%,#9dbbe2_18%,#3a70bd_32%,#1c56ab_45%,#2f69b8_60%,#1f5bb0_75%,#8fb2de_100%)] px-1.5 pb-1.5">
      <header className="flex h-7 shrink-0 items-start justify-between">
        <h2 className="flex items-center gap-1.5 pl-0.5 text-[14px] leading-7 text-gray-900">
          <QLogo className="h-4 w-4" />
          クリッパー
        </h2>
        <div className="flex h-5 overflow-hidden rounded-b-md border-x border-b border-[#1d2d4a]">
          <button aria-label="ヘルプ" className="w-[30px] bg-linear-to-b from-[#a8bfdf] to-[#5078b0] text-[14px] leading-5 font-bold text-white">?</button>
          <button aria-label="ウィンドウを閉じる" className="grid w-[50px] place-items-center border-l border-[#1d2d4a] bg-linear-to-b from-[#d99188] via-[#b8392d] to-[#98241a]">
            <svg viewBox="0 0 12 12" className="h-3 w-3"><path d="M2 2l8 8M10 2l-8 8" stroke="#444" strokeWidth="4" /><path d="M2 2l8 8M10 2l-8 8" stroke="#fff" strokeWidth="2.500" /></svg>
          </button>
        </div>
      </header>
      <form
        className="flex flex-1 flex-col border-2 border-[#5f7fae] bg-[#f0f0f0] px-3 pt-[22px] text-[12px] leading-5 whitespace-nowrap text-black"
        onSubmit={(e) => e.preventDefault()}
      >
        <div className="flex flex-col gap-1.5 px-2">
          <div className="flex items-center">
            <label htmlFor="in" className="w-[131px] shrink-0">入力ファイル(ラスタ)(<u>I</u>)</label>
            <span className="grid w-[124px] shrink-0">
              <select id="in" className={`${FIELD} col-start-1 row-start-1 h-[22px] appearance-none pl-0.5`}><option>kagawa4kei</option></select>
              <span className="pointer-events-none col-start-1 row-start-1 m-px grid w-4 place-items-center justify-self-end border-l border-gray-300 bg-[#f0f0f0]">
                <span className="h-0 w-0 border-x-4 border-t-[5px] border-x-transparent border-t-black" />
              </span>
            </span>
            <button className={`${BTN} ml-2.5 h-6 flex-1`}>選択...</button>
          </div>
          <div className="flex items-center">
            <label htmlFor="out" className="w-[131px] shrink-0">出力ファイル(<u>O</u>)</label>
            <input id="out" defaultValue="DEM5AB/megijima.tif" className={`${FIELD} h-[22px] w-[124px] shrink-0 px-0.5`} />
            <button className={`${BTN} ml-2.5 h-6 flex-1`}>選択...</button>
          </div>
          <div className="flex h-6 items-center">
            <span className="w-[131px] shrink-0"><Check big label="データが無い値"><span>データが無い値(<u>N</u>)</span></Check></span>
            <span className={`${FIELD} flex h-5 flex-1`}>
              <input aria-label="無い値" defaultValue="0" className="min-w-0 flex-1 pl-1" />
              <Spin big />
            </span>
          </div>
        </div>
        <fieldset className="mx-2 mt-1.5 h-[155px] min-w-0 rounded border border-[#bdbdbd] px-2.5 pb-2">
          <legend className="px-0.5">クリッピングモード</legend>
          <div className="mt-[7px] flex items-center">
            {[['範囲', true], ['マスクレイヤ', false]].map(([t, on]) => (
              <label key={t} className="flex w-[165px] items-center gap-1.5 pl-0.5">
                <input
                  type="radio"
                  name="mode"
                  defaultChecked={on}
                  className="h-3 w-3 appearance-none rounded-full border border-gray-400 bg-white checked:bg-[radial-gradient(circle,#000_3px,#fff_4px)]"
                />
                {t}
              </label>
            ))}
          </div>
          <p className="mt-0.5">キャンバスをドラッグして領域を指定して下さい</p>
          <p className="mt-0.5">または領域座標の変更</p>
          <div className="mt-0.5 flex gap-[27px]">
            <Coord n="1" x="47889.1480922" y="156932.186575" />
            <Coord n="2" x="53351.2980514" y="152423.745339" />
          </div>
        </fieldset>
        <div className="mt-3.5"><Check big label="ロード"><span>終了時にキャンバスにロードします(<u>L</u>)</span></Check></div>
        <div className="mt-1.5 flex gap-[7px]">
          <textarea
            aria-label="コマンド"
            wrap="off"
            className={`${FIELD} h-[99px] flex-1 resize-none overflow-hidden px-1 py-1 text-[12px] leading-[13px]`}
            defaultValue={'gdal_translate -a_nodata 0 -projwin 47889.1480922\n 156932.186575 53351.2980514 152423.745339 -of GTiff C:\n¥Users¥yamauchi¥Desktop¥kagawa¥moto¥FG-\nGML-5134-40-DEM5AB¥kagawa4kei.tif\nC:/Users/yamauchi/Desktop/kagawa/moto/FG-\nGML-5134-40-DEM5AB/megijima.tif'}
          />
          <div className="flex flex-col gap-1.5">
            <button aria-label="編集" className={`${BTN} grid h-[26px] w-7 place-items-center`}>
              <Svg className="h-4 w-4"><path d="M4 17l1-4L12 1l4 2-7 12z" fill="#f6ab2b" /><path d="M12 1l4 2-1.500 3-4-2z" fill="#e8503a" /><path d="M4 17l1-4 3 2z" fill="#555" /><path d="M10 15l5 3" stroke="#ddd" strokeWidth="2" /></Svg>
            </button>
            <button aria-label="リセット" className={`${BTN} grid h-[26px] w-7 place-items-center`}>
              <Svg className="h-[18px] w-[18px]"><circle cx="10" cy="10" r="8" fill="#d0d0d0" stroke="#aaa" strokeWidth="1.500" /><circle cx="10" cy="10" r="4.500" stroke="#fff" strokeWidth="2" /><path d="M10 11l4-4v5z" fill="#999" /></Svg>
            </button>
          </div>
        </div>
        <div className="mt-[11px] flex justify-end gap-[11px]">
          <button className={`${BTN} h-[25px] w-[79px] border-gray-600`}>OK</button>
          <button className={`${BTN} h-[25px] w-[79px]`}>閉じる</button>
          <button className={`${BTN} h-[25px] w-[79px]`}>ヘルプ</button>
        </div>
      </form>
    </section>
  );
}

export default function App() {
  return (
    <div className="relative flex min-h-screen overflow-hidden bg-white font-['Noto_Sans_CJK_JP',sans-serif] text-black [font-feature-settings:'palt']">
      <MainWindow />
      <aside className="w-[436px] shrink-0 pt-32 pl-[33px]">
        <ClipperDialog />
      </aside>
      <svg viewBox="0 0 440 30" className="pointer-events-none absolute top-[140px] left-[481px] z-30 h-[30px] w-[440px]" aria-hidden="true">
        <path d="M0 19L423 8v6L0 25z" fill="#f00" />
        <path d="M422 1l18 9-18 9z" fill="#f00" />
      </svg>
    </div>
  );
}
